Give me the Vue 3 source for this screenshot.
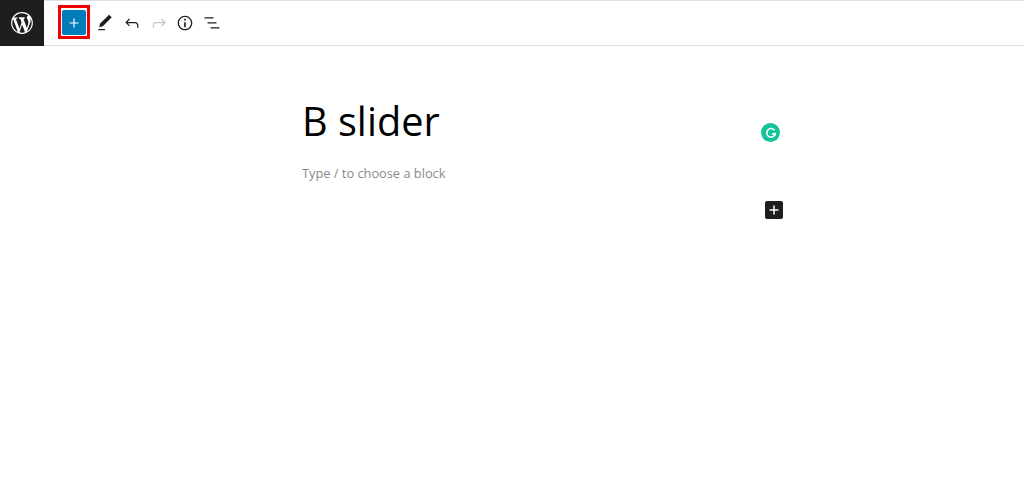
<template>
  <div class="editor">
    <header class="toolbar">
      <a class="wp-logo" aria-label="WordPress">
        <svg width="24" height="24" viewBox="-1 -1 22 22">
          <path fill="#fff" d="M20 10c0-5.51-4.49-10-10-10C4.48 0 0 4.49 0 10c0 5.52 4.48 10 10 10 5.51 0 10-4.48 10-10zM7.78 15.37L4.37 6.22c.55-.02 1.17-.08 1.17-.08.5-.06.44-1.13-.06-1.11 0 0-1.45.11-2.37.11-.18 0-.37 0-.58-.01C4.12 2.69 6.87 1.11 10 1.11c2.33 0 4.45.87 6.05 2.34-.68-.11-1.65.39-1.65 1.58 0 .74.45 1.36.9 2.1.35.61.55 1.36.55 2.46 0 1.49-1.4 5-1.4 5l-3.03-8.37c.54-.02.82-.17.82-.17.5-.05.44-1.25-.06-1.22 0 0-1.44.12-2.38.12-.87 0-2.33-.12-2.33-.12-.5-.03-.56 1.2-.06 1.22l.92.08 1.26 3.41zM17.41 10c.24-.64.74-1.87.43-4.25.7 1.29 1.05 2.71 1.05 4.25 0 3.29-1.73 6.24-4.4 7.78.97-2.59 1.94-5.2 2.92-7.78zM6.1 18.09C3.12 16.65 1.11 13.53 1.11 10c0-1.3.23-2.48.72-3.59C3.25 10.3 4.67 14.2 6.1 18.09zm4.03-6.63l2.58 6.98c-.86.29-1.76.45-2.71.45-.79 0-1.57-.11-2.29-.33.81-2.38 1.62-4.74 2.42-7.1z" />
        </svg>
      </a>
      <div class="tools">
        <span class="add-frame">
          <button class="add-btn" aria-label="Add block">
            <svg width="18" height="18" viewBox="0 0 24 24"><path fill="#fff" :d="icons.plus" /></svg>
          </button>
        </span>
        <button
          v-for="tool in tools"
          :key="tool.name"
          class="tool"
          :class="{ disabled: tool.disabled }"
          :aria-label="tool.name"
        >
          <svg width="20" height="20" viewBox="0 0 24 24"><path fill="currentColor" :d="tool.d" /></svg>
        </button>
      </div>
    </header>

    <main class="canvas">
      <div class="content">
        <h1 class="post-title">B slider</h1>
        <p class="placeholder">Type / to choose a block</p>
      </div>
      <span class="grammarly">
        <svg width="12" height="12" viewBox="0 0 12 12">
          <path fill="none" stroke="#fff" stroke-width="1.6" d="M9.6 3.4A4.3 4.3 0 1 0 10.2 7H6.8" />
          <path fill="#fff" d="M10.9 5.4v3.4L8 6.2z" />
        </svg>
      </span>
      <button class="inline-add" aria-label="Add block">
        <svg width="18" height="18" viewBox="0 0 24 24"><path fill="#fff" :d="icons.plusBold" /></svg>
      </button>
    </main>
  </div>
</template>

<script setup>
const icons = {
  plus: 'M18 11.2h-5.2V6h-1.6v5.2H6v1.6h5.2V18h1.6v-5.2H18z',
  plusBold: 'M18 11h-5V6h-2v5H6v2h5v5h2v-5h5z',
}

const tools = [
  { name: 'Tools', d: 'M20.1 5.1L16.9 2 6.2 12.7l-1.3 4.4 4.5-1.3L20.1 5.1zM4 20.8h8v-1.5H4v1.5z' },
  { name: 'Undo', d: 'M18.3 11.7c-.6-.6-1.4-.9-2.3-.9H6.7l2.9-3.3-1.1-1-4.5 5L8.5 16l1-1-2.7-2.7H16c.5 0 .9.2 1.3.5 1 1 1 3.4 1 4.5v.3h1.5v-.2c0-1.5 0-4.3-1.5-5.7z' },
  { name: 'Redo', disabled: true, d: 'M15.6 6.5l-1.1 1 2.9 3.3H8c-.9 0-1.7.3-2.3.9-1.4 1.5-1.4 4.2-1.4 5.6v.2h1.5v-.3c0-1.1 0-3.5 1-4.5.3-.3.7-.5 1.3-.5h9.2L14.5 15l1.1 1.1 4.6-4.6-4.6-5z' },
  { name: 'Details', d: 'M12 3.2c-4.8 0-8.8 3.9-8.8 8.8 0 4.8 3.9 8.8 8.8 8.8 4.8 0 8.8-3.9 8.8-8.8 0-4.8-4-8.8-8.8-8.8zm0 16c-4 0-7.2-3.3-7.2-7.2C4.8 8 8 4.8 12 4.8s7.2 3.3 7.2 7.2c0 4-3.2 7.2-7.2 7.2zM11 17h2v-6h-2v6zm0-8h2V7h-2v2z' },
  { name: 'List view', d: 'M13.8 5.2H3v1.5h10.8V5.2zm-3.6 12v1.5H21v-1.5H10.2zm7.2-6H6.6v1.5h10.8v-1.5z' },
]
</script>

<style>
html,
body {
  margin: 0;
  background: #fff;
}
</style>

<style scoped>
.editor {
  width: 1024px;
  height: 478px;
  overflow: hidden;
  background: #fff;
  font-family: 'Open Sans', 'Noto Sans', sans-serif;
}

.toolbar {
  display: flex;
  align-items: stretch;
  height: 46px;
  box-sizing: border-box;
  border-top: 1px solid #e0e0e0;
  border-bottom: 1px solid #e0e0e0;
}

.wp-logo {
  display: flex;
  align-items: center;
  justify-content: center;
  width: 44px;
  margin: -1px 0 -1px;
  background: #1e1e1e;
}

.tools {
  display: flex;
  align-items: center;
  padding-left: 14px;
}

.add-frame {
  display: flex;
  padding: 2px 1px 1px;
  margin-right: 2px;
  margin-bottom: 2px;
  border: 3px solid #f00000;
}

.add-btn {
  display: flex;
  align-items: center;
  justify-content: center;
  width: 24px;
  height: 25px;
  padding: 0;
  border: none;
  border-radius: 2px;
  background: #007cba;
}

.tool {
  display: flex;
  align-items: center;
  justify-content: center;
  width: 26.7px;
  height: 26px;
  padding: 0;
  border: none;
  background: none;
  color: #1e1e1e;
}

.tool.disabled {
  color: #c4c4c4;
}

.canvas {
  position: relative;
}

.content {
  width: 560px;
  margin-left: 302px;
  padding-top: 45px;
}

.post-title {
  margin: 0;
  font-size: 39.7px;
  line-height: 60px;
  font-weight: 400;
  color: #000;
}

.placeholder {
  margin: 11px 0 0;
  font-size: 12.8px;
  line-height: 22px;
  color: #8a8a8a;
}

.grammarly {
  position: absolute;
  left: 761px;
  top: 77px;
  display: flex;
  align-items: center;
  justify-content: center;
  width: 19px;
  height: 19px;
  border-radius: 50%;
  background: #15c39a;
}

.inline-add {
  position: absolute;
  left: 765px;
  top: 155px;
  display: flex;
  align-items: center;
  justify-content: center;
  width: 18px;
  height: 18px;
  padding: 0;
  border: none;
  border-radius: 2px;
  background: #1e1e1e;
}
</style>
